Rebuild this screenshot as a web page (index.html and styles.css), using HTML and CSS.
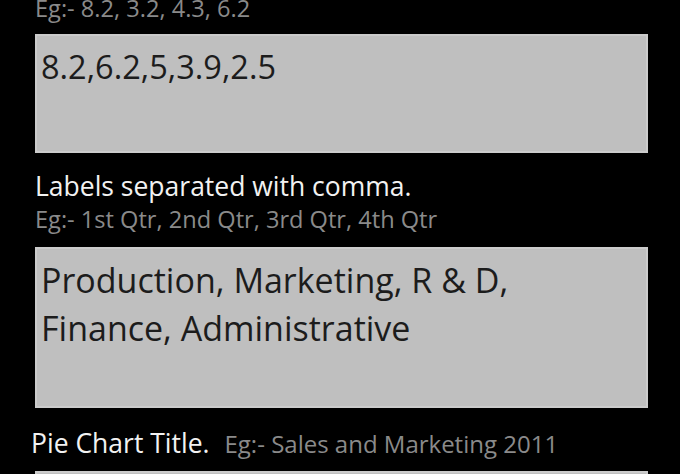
FILE: index.html
```html
<!DOCTYPE html>
<html lang="en">
<head>
<meta charset="utf-8">
<title>Pie Chart Input</title>
<link rel="stylesheet" href="styles.css">
</head>
<body>
<main class="form">
  <p class="hint hint-top">Eg:- 8.2, 3.2, 4.3, 6.2</p>
  <div class="field field-values">8.2,6.2,5,3.9,2.5</div>
  <p class="label label-block">Labels separated with comma.</p>
  <p class="hint hint-block">Eg:- 1st Qtr, 2nd Qtr, 3rd Qtr, 4th Qtr</p>
  <div class="field field-labels">Production, Marketing, R &amp; D,<br>Finance, Administrative</div>
  <p class="title-row"><span class="label">Pie Chart Title.</span><span class="hint hint-inline">Eg:- Sales and Marketing 2011</span></p>
  <div class="field field-title"></div>
</main>
</body>
</html>
```

FILE: styles.css
```css
html, body {
  margin: 0;
  padding: 0;
  background: #000;
  overflow: hidden;
}

body {
  width: 680px;
  height: 474px;
  font-family: "Open Sans", "Noto Sans", sans-serif;
}

.form {
  display: flex;
  flex-direction: column;
  padding-left: 35px;
  width: 613px;
}

.hint {
  margin: 0;
  white-space: nowrap;
  color: #8a8a8a;
  font-size: 23.6px;
  line-height: 30px;
}

.label {
  margin: 0;
  white-space: nowrap;
  color: #f2f2f2;
  font-size: 26.5px;
  line-height: 32px;
}

.hint-top {
  margin-top: -7px;
}

.hint-inline {
  font-size: 24px;
}

.field {
  box-sizing: border-box;
  background: #bfbfbf;
  border: 2px solid #cbcbcb;
  color: #1c1c1c;
  padding-left: 4px;
}

.field-values {
  margin-top: 11px;
  height: 119px;
  padding-top: 9px;
  font-size: 32.5px;
  line-height: 44px;
}

.label-block {
  margin-top: 17px;
}

.hint-block {
  margin-top: 2px;
}

.field-labels {
  margin-top: 13px;
  height: 161px;
  padding-top: 7px;
  font-size: 34px;
  line-height: 48px;
}

.title-row {
  display: flex;
  align-items: baseline;
  gap: 15px;
  margin: 19px 0 0 -4px;
  white-space: nowrap;
}

.field-title {
  margin-top: 12px;
  height: 60px;
}
```
